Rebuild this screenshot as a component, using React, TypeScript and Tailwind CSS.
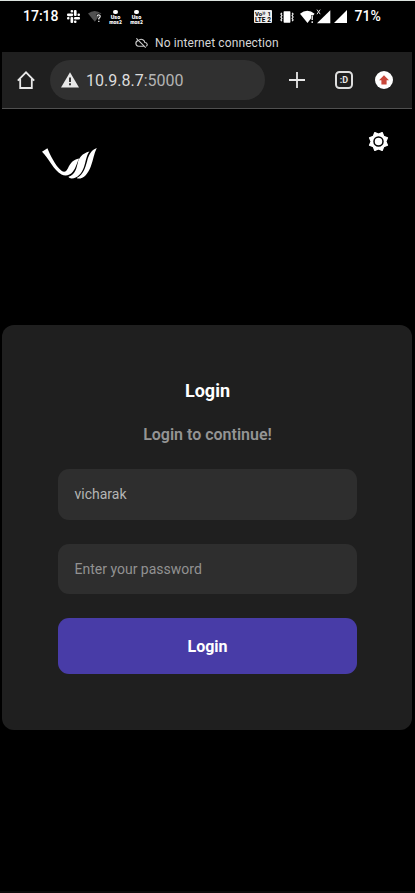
import type { ReactNode } from 'react';

function SlackMark() {
  return (
    <svg viewBox="0 0 13 13" className="ml-[8px] h-[13px] w-[13px] shrink-0" fill="#fff">
      <rect x="3.6" y="0" width="2.5" height="2.4" rx="1" />
      <rect x="0" y="3.5" width="6.1" height="2.7" rx="1.1" />
      <rect x="6.9" y="0" width="2.7" height="6.1" rx="1.1" />
      <rect x="10.5" y="3.5" width="2.5" height="2.5" rx="1" />
      <rect x="7" y="6.9" width="6" height="2.7" rx="1.1" />
      <rect x="7" y="10.5" width="2.5" height="2.5" rx="1" />
      <rect x="3.5" y="7" width="2.7" height="6" rx="1.1" />
      <rect x="0" y="7" width="2.5" height="2.5" rx="1" />
    </svg>
  );
}

function WifiUnknown() {
  return (
    <svg viewBox="0 0 14 13" className="ml-[8px] h-[13px] w-[14px] shrink-0">
      <path d="M0 3.4Q6.5-1.6 13.4 3.4L6.8 11.8z" fill="#505050" />
      <path d="M8.8 6.3q.3-2 2-1.8 1.9.2 1.7 1.8-.2 1-1.7 2.1v1M10.8 10.7v1.4" fill="none" stroke="#000" strokeWidth="2.2" />
      <path d="M9 6.4q.3-1.6 1.8-1.5 1.5.2 1.4 1.5-.2.9-1.4 2v1M10.8 10.7v1.4" fill="none" stroke="#e4e4e4" strokeWidth="1.3" />
    </svg>
  );
}

function CarrierBadge({ className }: { className: string }) {
  return (
    <div className={`flex h-[14px] w-[14px] shrink-0 flex-col items-center ${className}`}>
      <span className="h-[4.5px] w-[4.5px] shrink-0 rounded-full bg-white" />
      <span className="mt-[1px] text-[5.5px] leading-[4.5px] font-black text-white">Uso</span>
      <span className="text-[5px] leading-[4.5px] font-black text-white">mos2</span>
    </div>
  );
}

function StatusBar() {
  return (
    <div className="flex h-[31px] shrink-0 items-center border-t border-[#dce3df] pt-[1px] pl-[23px]">
      <span className="w-[36px] text-[14px] font-medium text-white">17:18</span>
      <SlackMark />
      <WifiUnknown />
      <CarrierBadge className="ml-[6.5px]" />
      <CarrierBadge className="ml-[7px]" />
      <div className="ml-[110.5px] flex h-[13px] w-[18px] shrink-0 flex-col overflow-hidden rounded-[1px] bg-[#eee] px-[1px] pt-[1px] text-black">
        <div className="flex justify-between text-[6px] leading-[5.5px] font-bold"><span>Vo⁾⁾</span><span>1</span></div>
        <div className="flex justify-between text-[6.5px] leading-[6px] font-bold"><span>LTE</span><span>2</span></div>
      </div>
      <svg viewBox="0 0 14 12" className="ml-[7.5px] h-[12px] w-[14px] shrink-0" fill="#fff">
        <rect x="3.6" y=".3" width="6.8" height="11.4" rx=".6" />
        <path d="M1.9 1.8l-1 1.3 1 1.4-1 1.5 1 1.5-1 1.4 1 1.3M12.1 1.8l1 1.3-1 1.4 1 1.5-1 1.5 1 1.4-1 1.3" fill="none" stroke="#eee" strokeWidth="1.2" />
      </svg>
      <svg viewBox="0 0 31 15" className="ml-[6px] h-[15px] w-[31px] shrink-0" fill="#fff">
        <path d="M0 4.7Q7.2-1 14.6 4.7L7.5 14z" />
        <path d="M12.2 6.2v8.5" stroke="#000" strokeWidth="2.4" />
        <path d="M12.2 6.6v4.4M12.2 12.3v1.7" stroke="#fff" strokeWidth="1.3" />
        <path d="M30.3 1.2V14.2H17z" />
        <path d="M17 .6l3.2 4.6M20.2.6L17 5.2" stroke="#000" strokeWidth="2.4" />
        <path d="M17 .6l3.2 4.6M20.2.6L17 5.2" stroke="#ddd" strokeWidth="1" />
      </svg>
      <svg viewBox="0 0 13 13" className="ml-[3.5px] h-[13px] w-[13px] shrink-0" fill="#fff"><path d="M13 0V13H0z" /></svg>
      <span className="ml-[7.5px] text-[14px] font-medium text-white">71%</span>
    </div>
  );
}

function Field({ children, color }: { children: ReactNode; color: string }) {
  return <div className={`flex h-[50.5px] w-full shrink-0 items-center rounded-[11px] bg-[#2e2e2e] pl-[16.5px] text-[14px] ${color}`}>{children}</div>;
}

export default function App() {
  return (
    <div className="flex h-[893px] w-[415px] flex-col overflow-hidden border-b-2 border-[#0b0b0b] bg-black font-['Roboto',sans-serif]">
      <StatusBar />
      <div className="flex h-[21px] shrink-0 items-center pt-[2px] pl-[135px] text-[12px] text-[#d6d6d6]">
        <svg viewBox="0 0 14 12" className="mr-[7px] h-[12px] w-[13px]" fill="none" stroke="#ccc" strokeWidth="1.2">
          <path d="M4.6 2.5a4 4 0 0 1 6 3c2.8.2 3.3 3 1.5 4M3.4 3.4C.1 4 .1 9.2 3.7 9.5h5.8M1.5 1l10 10" />
        </svg>
        <span className="tracking-[.1px]">No internet connection</span>
      </div>
      <div className="mr-[3px] ml-[2px] flex h-[57px] shrink-0 items-center border-b border-[#505050] bg-[#1f1f1f] pl-[15px]">
        <svg viewBox="0 0 18 18" className="h-[18px] w-[18px] shrink-0" fill="none" stroke="#e8e8e8" strokeWidth="1.8">
          <path d="M.8 9.6L9 1.3l8.2 8.3M3.2 8v9h11.6V8" />
        </svg>
        <div className="ml-[15px] flex h-[40px] w-[215px] shrink-0 items-center rounded-full bg-[#303030] pl-[10.5px]">
          <svg viewBox="0 0 18 16" className="h-[16px] w-[18px]">
            <path d="M9 .2L18 15.6H0z" fill="#e8e8e8" />
            <path d="M9 5.5v4.6M9 11.3v2" stroke="#303030" strokeWidth="1.9" />
          </svg>
          <span className="mt-[2px] ml-[7.5px] text-[16px] text-[#dcdcdc]">10.9.8.7<span className="text-[#b4b4b4]">:5000</span></span>
        </div>
        <svg viewBox="0 0 16 16" className="ml-[24px] h-[16px] w-[16px] shrink-0" stroke="#e8e8e8" strokeWidth="1.8"><path d="M8 0v16M0 8h16" /></svg>
        <div className="ml-[30px] flex h-[18px] w-[18px] shrink-0 items-center justify-center rounded-[4.5px] border-2 border-[#dedede] text-[9px] leading-none font-bold text-[#e8e8e8]">:D</div>
        <svg viewBox="0 0 18 18" className="ml-[22px] h-[18px] w-[18px] shrink-0"><circle cx="9" cy="9" r="9" fill="#fff" /><path d="M9 4.2l5 5h-2.4v4.3H6.4V9.2H4z" fill="#c9473b" /></svg>
      </div>
      <div className="flex h-[216px] shrink-0 items-start justify-between pt-[22px] pr-[26px] pl-[41px]">
        <svg viewBox="0 0 56 32" className="mt-[17px] h-[32px] w-[56px]" fill="#fff">
          <path d="M1 3.7L6.4 .2C9 6.5 14 17.3 20.5 22.8C23.5 25 25.2 23.5 26.8 20.5C29.5 14.8 32 11.6 38.2 10.4C35.8 14.5 35 20 31.8 23.8C28.5 27.8 24 28.3 20.5 26.4C12.5 22 8 10.5 1 3.7Z" />
          <path d="M27.4 28.8C34.8 26 35.6 19.5 36.9 14.2C38 9.6 41 5.4 48.4 3.4C45.4 7.4 44.8 13.5 43 19C40.8 25.4 36.2 30.7 30.5 30.5C29.2 30.4 28.1 29.8 27.4 28.8Z" />
          <path d="M35.8 30C42.7 26.2 44.1 20 46.1 13.2C47.5 7.6 50 2 55.8 0C52.9 5.4 52.4 11.8 49.8 18.4C47.2 25.2 43 30.6 37.4 30.6C36.8 30.6 36.2 30.4 35.8 30Z" />
        </svg>
        <svg viewBox="-10.5 -10.5 21 21" className="h-[21px] w-[21px]">
          <path d="M3.7-9L5.2-5.2 9-3.7 7.4 0 9 3.7 5.2 5.2 3.7 9 0 7.4-3.7 9-5.2 5.2-9 3.7-7.4 0-9-3.7-5.2-5.2-3.7-9 0-7.4z" fill="#fff" stroke="#fff" strokeWidth="1.2" strokeLinejoin="round" />
          <circle r="4.5" fill="none" stroke="#000" strokeWidth="1.5" />
        </svg>
      </div>
      <main className="mr-[3px] ml-[2px] flex h-[405px] shrink-0 flex-col items-center rounded-[12px] bg-[#1f1f1f] pr-[55px] pl-[56px]">
        <h1 className="mt-[52px] text-[18px] leading-[28px] font-bold text-white">Login</h1>
        <p className="mt-[18px] text-[16px] leading-[24px] font-semibold text-[#949494]">Login to continue!</p>
        <div className="mt-[22px] w-full"><Field color="text-[#b5b5b5]">vicharak</Field></div>
        <div className="mt-[24px] w-full"><Field color="text-[#929292] pt-[1.5px]">Enter your password</Field></div>
        <button className="mt-[24px] h-[56px] w-full shrink-0 rounded-[11px] bg-[#483ca7] pt-px text-[16px] font-bold text-white">Login</button>
      </main>
    </div>
  );
}
